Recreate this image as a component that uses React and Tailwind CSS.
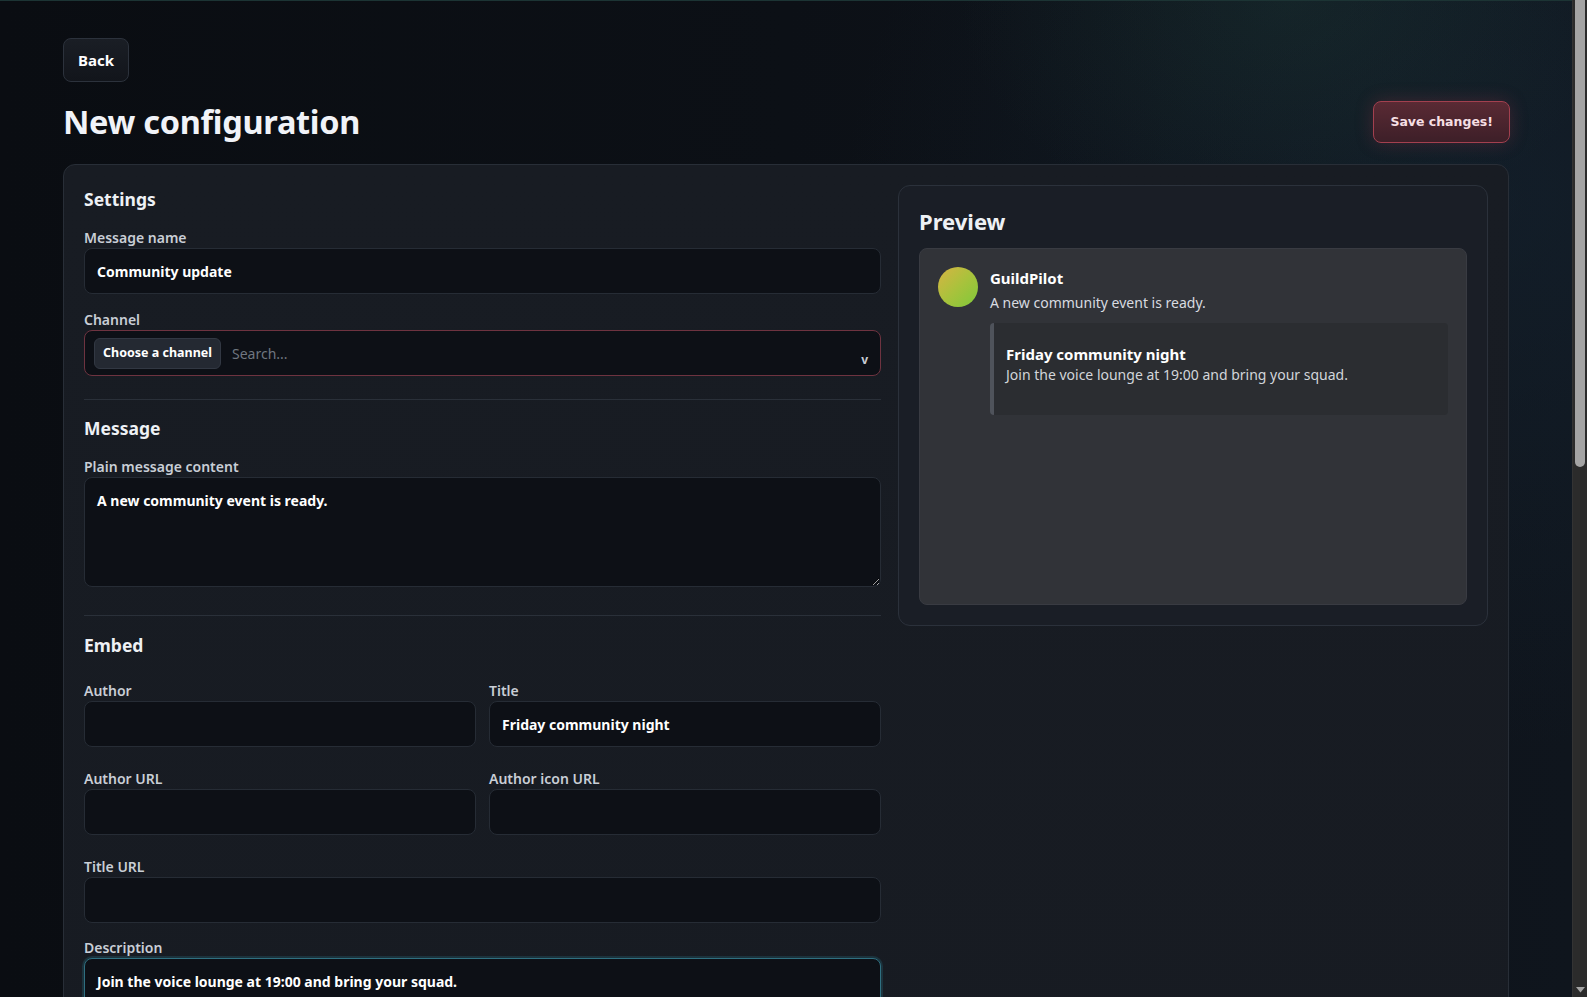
import React from "react";

const font = { fontFamily: '"Noto Sans", "Open Sans", sans-serif' };

function Label({ children }) {
  return (
    <div className="mb-0 pt-[1px] text-[14px] font-semibold leading-5 text-[#c9ced6]">
      {children}
    </div>
  );
}

function TextInput({ value, placeholder }) {
  return (
    <input
      readOnly
      value={value || ""}
      placeholder={placeholder || ""}
      className="block h-[46px] w-full rounded-lg border border-[#262c35] bg-[#0d1016] px-3 text-[14px] font-bold text-white outline-none"
    />
  );
}

function TextArea({ value, focused }) {
  return (
    <textarea
      readOnly
      value={value}
      className={
        "block h-[110px] w-full resize-y rounded-lg border bg-[#0d1016] px-3 pb-[10px] pt-[13px] text-[14px] font-bold leading-5 text-white outline-none " +
        (focused
          ? "border-[#2f6f80] shadow-[0_0_0_2px_rgba(40,120,140,0.25)]"
          : "border-[#262c35]")
      }
    />
  );
}

function Field({ label, children, className }) {
  return (
    <div className={className}>
      <Label>{label}</Label>
      {children}
    </div>
  );
}

function SectionTitle({ children }) {
  return (
    <h2 className="text-[17.5px] font-bold leading-7 text-[#eef1f5]">{children}</h2>
  );
}

function Divider() {
  return <div className="h-px w-full bg-[#2a3039]" />;
}

function ChannelPicker() {
  return (
    <div className="flex h-[46px] w-full items-center rounded-lg border border-[#6e3340] bg-[#0d1016] pl-[9px] pr-3">
      <span className="flex h-[31px] items-center rounded-md border border-[#323843] bg-[#242932] px-[8px] text-[12.5px] font-bold text-white">
        Choose a channel
      </span>
      <span className="ml-[11px] flex-1 text-[14px] text-[#6f7680]">Search...</span>
      <span className="mt-[14px] text-[12px] font-bold text-[#c7ccd4]">v</span>
    </div>
  );
}

function DiscordPreview() {
  return (
    <div className="min-h-[357px] rounded-lg border border-[#393b42] bg-[#313338] p-[18px]">
      <div className="flex gap-3">
        <div className="h-10 w-10 shrink-0 rounded-full bg-[linear-gradient(135deg,#d8b443_0%,#a9c23c_50%,#7fc93a_100%)]" />
        <div className="min-w-0 flex-1">
          <div className="pt-px text-[15px] font-bold leading-5 text-white">GuildPilot</div>
          <div className="mt-[5px] text-[14px] leading-5 text-[#d8dbe0]">
            A new community event is ready.
          </div>
          <div className="mt-[10px] rounded-[4px] border-l-4 border-[#4f535b] bg-[#2b2d31] pb-[30px] pl-3 pr-4 pt-[20px]">
            <div className="text-[15px] font-bold leading-[22px] text-white">
              Friday community night
            </div>
            <div className="text-[14px] leading-5 text-[#d2d5da]">
              Join the voice lounge at 19:00 and bring your squad.
            </div>
          </div>
        </div>
      </div>
    </div>
  );
}

function ScrollTrack() {
  return (
    <div className="flex h-full w-[15px] shrink-0 flex-col border-l border-[#333] bg-[#2b2b2b]">
      <div className="mx-[2px] h-[467px] rounded-b-[5px] bg-[#a4a4a4]" />
      <div className="flex-1" />
      <div className="flex h-[15px] items-center justify-center">
        <svg width="9" height="6" viewBox="0 0 9 6">
          <path d="M0 0 L9 0 L4.5 5.5 Z" fill="#a4a4a4" />
        </svg>
      </div>
    </div>
  );
}

export default function App() {
  return (
    <div style={font} className="flex h-screen overflow-hidden bg-[#0b0e13]">
      <div className="min-w-0 flex-1 overflow-hidden">
        <div className="min-h-full border-t border-[#1c3434] bg-[radial-gradient(ellipse_30%_25%_at_82%_0%,rgba(40,85,70,0.2),transparent_70%),radial-gradient(ellipse_55%_55%_at_95%_15%,rgba(22,38,52,0.5),transparent_75%),linear-gradient(90deg,#0a0d12_0%,#0c1016_50%,#0f151d_100%)] px-[63px] pb-[64px] pt-[37px]">
          <button className="flex h-[44px] items-center rounded-lg border border-[#2c323c] bg-[linear-gradient(180deg,#1a1e25,#12151b)] px-[14px] text-[15px] font-bold text-white">
            Back
          </button>

          <div className="mt-[20px] flex h-[40px] items-center justify-between">
            <h1 className="text-[32.5px] font-bold leading-10 tracking-[-0.3px] text-[#f1f3f8]">
              New configuration
            </h1>
            <button
              style={{ fontFamily: '"DejaVu Sans", Verdana, sans-serif' }}
              className="mr-[-1px] h-[42px] rounded-lg border border-[#a3404f] bg-[linear-gradient(180deg,#5a2a34,#3d1f28)] px-[16px] text-[12.5px] font-bold text-[#f6dfe3] shadow-[0_0_18px_rgba(190,60,80,0.25)]"
            >
              Save changes!
            </button>
          </div>

          <div className="mt-[22px] rounded-xl border border-[#282e37] bg-[linear-gradient(180deg,#181c23,#171b22)] p-5">
            <div className="grid grid-cols-[797px_minmax(0,1fr)] items-start gap-[17px]">
              {/* Settings form */}
              <div>
                <SectionTitle>Settings</SectionTitle>
                <div className="mt-[14px] flex flex-col gap-[15px]">
                  <Field label="Message name">
                    <TextInput value="Community update" />
                  </Field>
                  <Field label="Channel">
                    <ChannelPicker />
                  </Field>
                </div>

                <div className="mb-[14px] mt-[23px]">
                  <Divider />
                </div>

                <SectionTitle>Message</SectionTitle>
                <div className="mt-[14px]">
                  <Field label="Plain message content">
                    <TextArea value="A new community event is ready." />
                  </Field>
                </div>

                <div className="mb-[15px] mt-[28px]">
                  <Divider />
                </div>

                <SectionTitle>Embed</SectionTitle>
                <div className="mt-[21px] grid grid-cols-2 gap-x-[13px] gap-y-[21px]">
                  <Field label="Author">
                    <TextInput />
                  </Field>
                  <Field label="Title">
                    <TextInput value="Friday community night" />
                  </Field>
                  <Field label="Author URL">
                    <TextInput />
                  </Field>
                  <Field label="Author icon URL">
                    <TextInput />
                  </Field>
                </div>
                <div className="mt-[21px] flex flex-col gap-[14px]">
                  <Field label="Title URL">
                    <TextInput />
                  </Field>
                  <Field label="Description">
                    <TextArea
                      focused
                      value="Join the voice lounge at 19:00 and bring your squad."
                    />
                  </Field>
                </div>
                <div className="mt-[21px] grid grid-cols-2 gap-x-[13px] gap-y-[21px]">
                  <Field label="Color">
                    <TextInput value="#5865F2" />
                  </Field>
                  <Field label="Timestamp">
                    <TextInput />
                  </Field>
                  <Field label="Image URL">
                    <TextInput />
                  </Field>
                  <Field label="Thumbnail URL">
                    <TextInput />
                  </Field>
                </div>
              </div>

              {/* Live preview */}
              <div className="rounded-xl border border-[#2b313b] bg-[#1a1e26] p-5">
                <h2 className="text-[22px] font-bold leading-[30px] text-[#eef1f5]">Preview</h2>
                <div className="mt-3">
                  <DiscordPreview />
                </div>
              </div>
            </div>
          </div>
        </div>
      </div>
      <ScrollTrack />
    </div>
  );
}
